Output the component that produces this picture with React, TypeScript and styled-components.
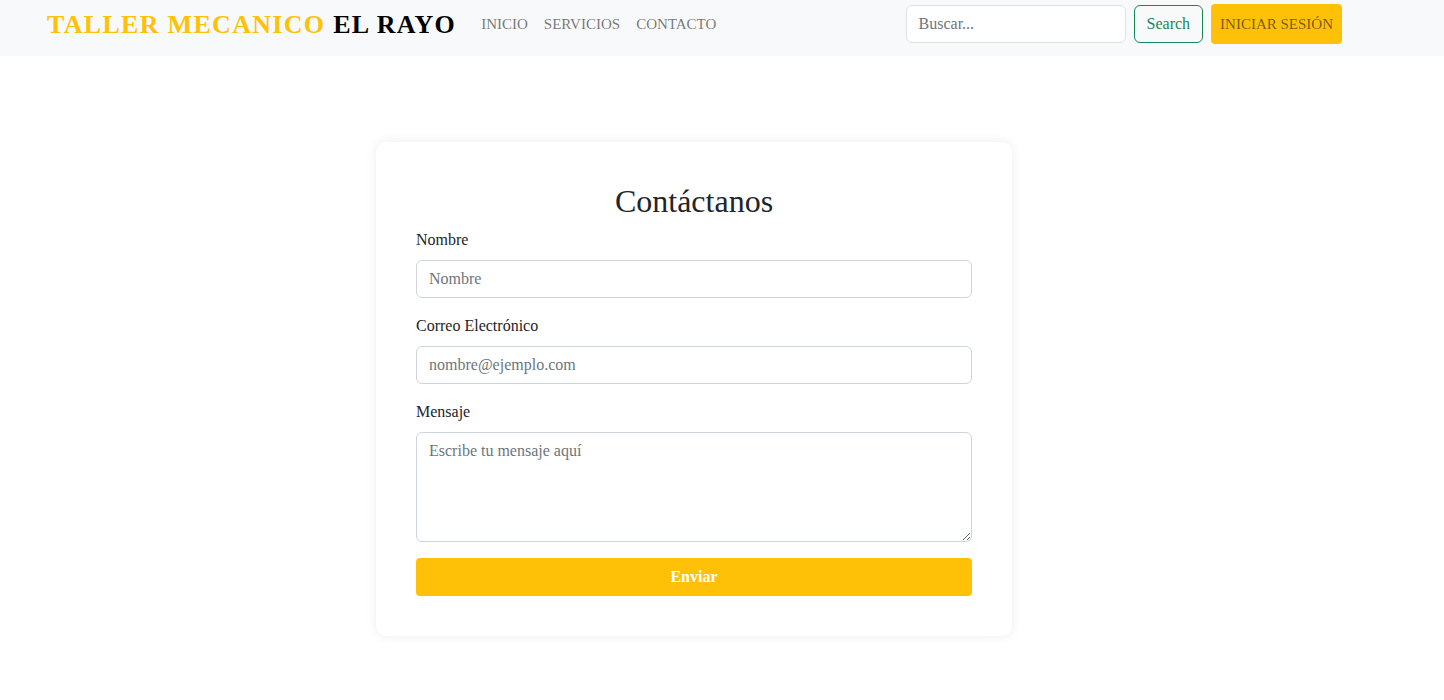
import styled, { createGlobalStyle } from "styled-components"

const GlobalStyle = createGlobalStyle`
  *, *::before, *::after { box-sizing: border-box; }
  body {
    margin: 0;
    background: #fff;
    font-family: "Liberation Serif", "Times New Roman", serif;
    font-size: 16px;
    line-height: 1.5;
    color: #212529;
  }
`

const NavBar = styled.nav`
  display: flex;
  align-items: center;
  height: 56px;
  padding: 0 102px 8px 47px;
  background: #f8f9fa;
`

const Brand = styled.a`
  font-size: 26px;
  font-weight: bold;
  letter-spacing: 1.3px;
  color: #000;
  text-decoration: none;
  margin-right: 17px;
  white-space: nowrap;
  span {
    color: #ffc107;
  }
`

const NavLinks = styled.ul`
  display: flex;
  list-style: none;
  margin: 0;
  padding: 0;
`

const NavLink = styled.a`
  display: block;
  padding: 8px 8px;
  font-size: 15px;
  color: rgba(0, 0, 0, 0.55);
  text-decoration: none;
`

const SearchForm = styled.form`
  display: flex;
  align-items: center;
  margin-left: auto;
  gap: 8px;
`

const SearchInput = styled.input`
  width: 220px;
  height: 38px;
  padding: 6px 12px;
  font-family: inherit;
  font-size: 16px;
  border: 1px solid #dee2e6;
  border-radius: 6px;
  background: #fff;
  &::placeholder { color: #6c757d; }
`

const OutlineButton = styled.button`
  height: 38px;
  padding: 6px 12px;
  font-family: inherit;
  font-size: 16px;
  color: #198754;
  background: transparent;
  border: 1px solid #198754;
  border-radius: 6px;
`

const LoginButton = styled.a`
  display: block;
  height: 40px;
  line-height: 24px;
  padding: 8px 9px;
  font-size: 15px;
  color: rgba(0, 0, 0, 0.55);
  background: #ffc107;
  border-radius: 4px;
  text-decoration: none;
`

const Main = styled.main`
  padding: 86px 0 60px 376px;
`

const Card = styled.div`
  width: 636px;
  padding: 40px;
  background: #fff;
  border-radius: 10px;
  box-shadow: 0 0 12px rgba(0, 0, 0, 0.08);
`

const Title = styled.h2`
  margin: 0 0 8px;
  font-size: 32px;
  font-weight: 500;
  line-height: 1.2;
  text-align: center;
`

const Field = styled.div`
  margin-bottom: 16px;
`

const Label = styled.label`
  display: block;
  margin-bottom: 8px;
`

const Input = styled.input`
  display: block;
  width: 100%;
  height: 38px;
  padding: 6px 12px;
  font-family: inherit;
  font-size: 16px;
  color: #212529;
  border: 1px solid #ced4da;
  border-radius: 6px;
  &::placeholder { color: #6c757d; }
`

const TextArea = styled.textarea`
  display: block;
  width: 100%;
  height: 110px;
  padding: 6px 12px;
  font-family: inherit;
  font-size: 16px;
  line-height: 1.5;
  border: 1px solid #ced4da;
  border-radius: 6px;
  &::placeholder { color: #6c757d; }
`

const SubmitButton = styled.button`
  display: block;
  width: 100%;
  height: 38px;
  font-family: inherit;
  font-size: 16px;
  font-weight: bold;
  color: #fff;
  background: #ffc107;
  border: none;
  border-radius: 4px;
`

export default function App() {
  return (
    <>
      <GlobalStyle />
      <NavBar>
        <Brand href="#">
          <span>TALLER MECANICO</span> EL RAYO
        </Brand>
        <NavLinks>
          <li><NavLink href="#">INICIO</NavLink></li>
          <li><NavLink href="#">SERVICIOS</NavLink></li>
          <li><NavLink href="#">CONTACTO</NavLink></li>
        </NavLinks>
        <SearchForm onSubmit={(e) => e.preventDefault()}>
          <SearchInput type="search" placeholder="Buscar..." />
          <OutlineButton type="submit">Search</OutlineButton>
          <LoginButton href="#">INICIAR SESIÓN</LoginButton>
        </SearchForm>
      </NavBar>
      <Main>
        <Card>
          <Title>Contáctanos</Title>
          <form onSubmit={(e) => e.preventDefault()}>
            <Field>
              <Label htmlFor="nombre">Nombre</Label>
              <Input id="nombre" type="text" placeholder="Nombre" />
            </Field>
            <Field>
              <Label htmlFor="email">Correo Electrónico</Label>
              <Input id="email" type="email" placeholder="nombre@ejemplo.com" />
            </Field>
            <Field>
              <Label htmlFor="mensaje">Mensaje</Label>
              <TextArea id="mensaje" rows={4} placeholder="Escribe tu mensaje aquí" />
            </Field>
            <SubmitButton type="submit">Enviar</SubmitButton>
          </form>
        </Card>
      </Main>
    </>
  )
}
